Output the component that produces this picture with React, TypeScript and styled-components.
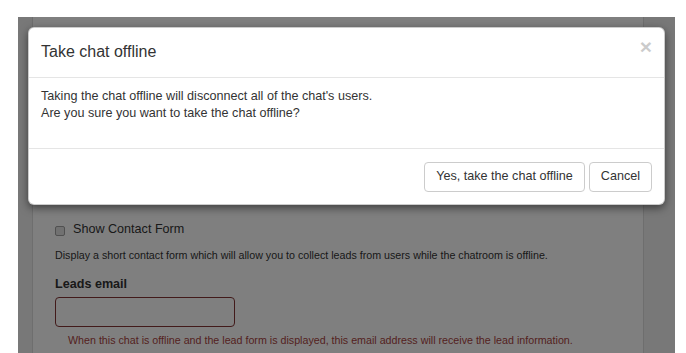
import styled, { createGlobalStyle } from "styled-components";

const Global = createGlobalStyle`
	html, body {
		margin: 0;
		padding: 0;
		background: #fff;
		font-family: "Liberation Sans", Arial, sans-serif;
		color: #333;
	}
	* {
		box-sizing: border-box;
	}
`;

const Frame = styled.div`
	position: relative;
	margin: 17px 11px 0 18px;
	height: 336px;
	overflow: hidden;
	background: #f0f0f0;
	padding: 0 31px 0 14px;
`;

const Panel = styled.div`
	height: 100%;
	background: #fff;
	border-left: 1px solid #ddd;
	border-right: 1px solid #ddd;
	padding: 204px 22px 0;
	font-size: 12.6px;
	line-height: 17px;
`;

const CheckRow = styled.label`
	display: flex;
	align-items: center;
	gap: 8px;
	height: 17px;
`;

const Check = styled.input.attrs({ type: "checkbox" })`
	appearance: none;
	margin: 0 0 -2px;
	width: 10px;
	height: 10px;
	border: 1px solid #a0a0a0;
	border-radius: 2px;
	background: #e2e2e2;
`;

const Hint = styled.p`
	margin: ${p => (p.$error ? "6px" : "10px")} 0 0;
	font-size: 10.7px;
	line-height: 15px;
	color: ${p => (p.$error ? "#a94442" : "#333")};
	padding-left: ${p => (p.$error ? "13px" : "0")};
`;

const FieldLabel = styled.div`
	margin-top: 13px;
	font-weight: bold;
`;

const TextInput = styled.input`
	display: block;
	margin-top: 4px;
	width: 180px;
	height: 30px;
	border: 1px solid #843534;
	border-radius: 4px;
	background: #fff;
`;

const Backdrop = styled.div`
	position: absolute;
	inset: 0;
	background: rgba(0, 0, 0, 0.5);
`;

const Modal = styled.div`
	position: absolute;
	top: 10px;
	left: 10px;
	right: 10px;
	background: #fff;
	border: 1px solid rgba(0, 0, 0, 0.2);
	border-radius: 6px;
	box-shadow: 0 3px 9px rgba(0, 0, 0, 0.5);
	color: #333;
`;

const Header = styled.div`
	display: flex;
	justify-content: space-between;
	padding: 14px 12px 15px;
	border-bottom: 1px solid #e5e5e5;

	h4 {
		margin: 0;
		font-size: 16px;
		line-height: 20px;
		font-weight: normal;
	}
`;

const Close = styled.button`
	border: 0;
	padding: 0;
	margin-top: -5px;
	background: none;
	font-family: "Liberation Sans", Arial, sans-serif;
	font-size: 21px;
	font-weight: bold;
	line-height: 20px;
	color: #000;
	opacity: 0.2;
	align-self: flex-start;
`;

const Body = styled.div`
	padding: 10px 12px 26px;
	font-size: 12.6px;
	line-height: 17px;
`;

const Footer = styled.div`
	display: flex;
	justify-content: flex-end;
	gap: 4px;
	padding: 13px 12px 12px;
	border-top: 1px solid #e5e5e5;
`;

const Button = styled.button`
	height: 30px;
	padding: 5px 11px 7px;
	border: 1px solid #ccc;
	border-radius: 4px;
	background: #fff;
	color: #333;
	font-family: "Liberation Sans", Arial, sans-serif;
	font-size: 12.6px;
	line-height: 16px;
`;

export default function App() {
	return (
		<>
			<Global />
			<Frame>
				<Panel>
					<CheckRow>
						<Check />
						<span>Show Contact Form</span>
					</CheckRow>
					<Hint>
						Display a short contact form which will allow you to collect leads
						from users while the chatroom is offline.
					</Hint>
					<FieldLabel>Leads email</FieldLabel>
					<TextInput type="email" />
					<Hint $error>
						When this chat is offline and the lead form is displayed, this email
						address will receive the lead information.
					</Hint>
				</Panel>
				<Backdrop />
				<Modal>
					<Header>
						<h4>Take chat offline</h4>
						<Close>×</Close>
					</Header>
					<Body>
						Taking the chat offline will disconnect all of the chat's users.
						<br />
						Are you sure you want to take the chat offline?
					</Body>
					<Footer>
						<Button>Yes, take the chat offline</Button>
						<Button>Cancel</Button>
					</Footer>
				</Modal>
			</Frame>
		</>
	);
}
